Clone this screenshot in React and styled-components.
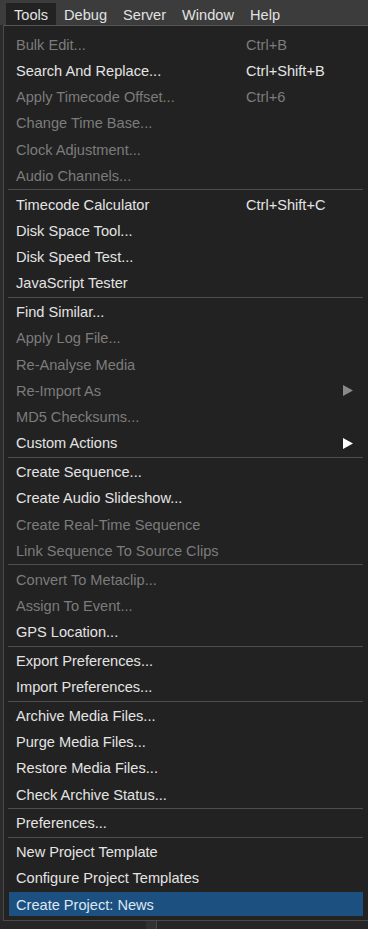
import React from "react";
import styled, { createGlobalStyle } from "styled-components";

const Global = createGlobalStyle`
  html, body { margin: 0; padding: 0; background: #2b2b2b; overflow: hidden; }
  body { font-family: "Liberation Sans", Arial, sans-serif; }
  #root { width: 368px; height: 929px; }
`;

const Page = styled.div`
  width: 368px;
  height: 929px;
  display: flex;
  flex-direction: column;
  background: #2b2b2b;
  overflow: hidden;
`;

const MenuBar = styled.div`
  height: 25px;
  flex: none;
  display: flex;
  align-items: flex-end;
  padding-left: 6px;
  background: #3c3c3c;
`;

const BarItem = styled.div`
  height: 22px;
  padding: 2px 8px 0;
  display: flex;
  align-items: center;
  font-size: 14.6px;
  color: #e2e2e2;
  background: ${(p) => (p.$open ? "#222222" : "transparent")};
  box-sizing: border-box;
`;

const Body = styled.div`
  flex: 1;
  display: flex;
  flex-direction: column;
  min-height: 0;
`;

const Panel = styled.div`
  margin-left: 3px;
  width: 370px;
  flex: none;
  background: #222222;
  border-top: 1px solid #555555;
  border-left: 1px solid #4a4a4a;
  border-bottom: 1px solid #4a4a4a;
  padding: 5px 0 3px 5px;
  box-sizing: border-box;
  display: flex;
  flex-direction: column;
`;

const Row = styled.div`
  height: 26.25px;
  width: 354px;
  flex: none;
  box-sizing: border-box;
  padding: 1px 0;
  display: flex;
`;

const RowInner = styled.div`
  flex: 1;
  display: flex;
  align-items: center;
  padding-left: 7px;
  padding-top: 1px;
  font-size: 14.6px;
  color: ${(p) => (p.$disabled ? "#7c7c7c" : p.$active ? "#dfe7f0" : "#e4e4e4")};
  background: ${(p) => (p.$active ? "#1b5080" : "transparent")};
  white-space: nowrap;
  position: relative;
`;

const Label = styled.span`
  width: 230px;
  flex: none;
`;

const Shortcut = styled.span`
  flex: none;
`;

const Arrow = styled.svg`
  position: absolute;
  left: 334px;
  top: 50%;
  margin-top: -5px;
`;

const Sep = styled.div`
  height: 2.5px;
  width: 355px;
  margin-left: -1px;
  flex: none;
  display: flex;
  align-items: center;
  &::after {
    content: "";
    display: block;
    height: 1px;
    width: 100%;
    background: #4e4e4e;
  }
`;

const Bottom = styled.div`
  flex: 1;
  display: flex;
  background: #262626;
`;

const BottomLeft = styled.div`
  width: 146px;
  flex: none;
`;

const BottomBlock = styled.div`
  width: 10px;
  flex: none;
  background: #313131;
  border-right: 1px solid #4a4a4a;
`;

const groups = [
  [
    ["Bulk Edit...", "Ctrl+B", true],
    ["Search And Replace...", "Ctrl+Shift+B"],
    ["Apply Timecode Offset...", "Ctrl+6", true],
    ["Change Time Base...", "", true],
    ["Clock Adjustment...", "", true],
    ["Audio Channels...", "", true],
  ],
  [
    ["Timecode Calculator", "Ctrl+Shift+C"],
    ["Disk Space Tool..."],
    ["Disk Speed Test..."],
    ["JavaScript Tester"],
  ],
  [
    ["Find Similar..."],
    ["Apply Log File...", "", true],
    ["Re-Analyse Media", "", true],
    ["Re-Import As", "", true, true],
    ["MD5 Checksums...", "", true],
    ["Custom Actions", "", false, true],
  ],
  [
    ["Create Sequence..."],
    ["Create Audio Slideshow..."],
    ["Create Real-Time Sequence", "", true],
    ["Link Sequence To Source Clips", "", true],
  ],
  [
    ["Convert To Metaclip...", "", true],
    ["Assign To Event...", "", true],
    ["GPS Location..."],
  ],
  [["Export Preferences..."], ["Import Preferences..."]],
  [
    ["Archive Media Files..."],
    ["Purge Media Files..."],
    ["Restore Media Files..."],
    ["Check Archive Status..."],
  ],
  [["Preferences..."]],
  [
    ["New Project Template"],
    ["Configure Project Templates"],
    ["Create Project: News", "", false, false, true],
  ],
];

function Item({ label, shortcut, disabled, sub, active }) {
  return (
    <Row>
      <RowInner $disabled={disabled} $active={active}>
        <Label>{label}</Label>
        {shortcut ? <Shortcut>{shortcut}</Shortcut> : null}
        {sub ? (
          <Arrow width="10" height="11" viewBox="0 0 10 11">
            <polygon points="0,0 10,5.5 0,11" fill={disabled ? "#8a8a8a" : "#ffffff"} />
          </Arrow>
        ) : null}
      </RowInner>
    </Row>
  );
}

export default function App() {
  return (
    <Page>
      <Global />
      <MenuBar>
        <BarItem $open>Tools</BarItem>
        <BarItem>Debug</BarItem>
        <BarItem>Server</BarItem>
        <BarItem>Window</BarItem>
        <BarItem>Help</BarItem>
      </MenuBar>
      <Body>
        <Panel>
          {groups.map((g, gi) => (
            <React.Fragment key={gi}>
              {gi > 0 ? <Sep /> : null}
              {g.map(([label, shortcut, disabled, sub, active]) => (
                <Item
                  key={label}
                  label={label}
                  shortcut={shortcut}
                  disabled={disabled}
                  sub={sub}
                  active={active}
                />
              ))}
            </React.Fragment>
          ))}
        </Panel>
        <Bottom>
          <BottomLeft />
          <BottomBlock />
        </Bottom>
      </Body>
    </Page>
  );
}
